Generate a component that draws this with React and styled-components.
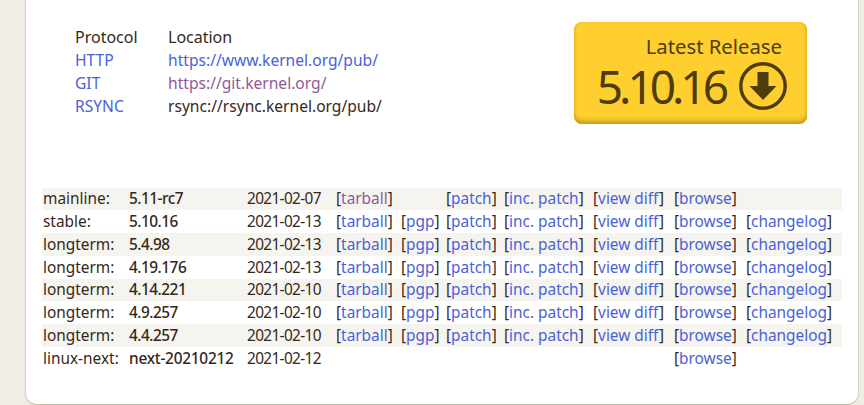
import styled, { createGlobalStyle } from "styled-components";

const GlobalStyle = createGlobalStyle`
  html, body {
    margin: 0;
    height: 405px;
    overflow: hidden;
    background: #f0eee4;
  }
  body {
    font-family: "Noto Sans", "Open Sans", sans-serif;
    font-size: 15.6px;
    color: #35281a;
  }
`;

const Page = styled.div`
  width: 864px;
  height: 405px;
  padding: 0 6px 1px 26px;
  box-sizing: border-box;
`;
const Card = styled.main`
  height: 404px;
  box-sizing: border-box;
  background: #fff;
  border-radius: 0 0 10px 10px;
  box-shadow: 0 1px 1px #bdb8a0, -1px 0 1px #d3d0bf, 1px 0 1px #d8d5c5;
  padding: 26px 16px 0;
`;
const Top = styled.div`
  display: flex;
  justify-content: space-between;
  align-items: flex-start;
  height: 162px;
`;
const MirrorTable = styled.table`
  border-collapse: collapse;
  margin-left: 33px;
  line-height: 23px;
  th, td {
    padding: 0;
    font-weight: 400;
    text-align: left;
  }
  th {
    font-size: 16px;
  }
  th:first-child, td:first-child {
    width: 93px;
  }
`;
const Link = styled.a`
  color: ${(p) => (p.$visited ? "#8f5a96" : "#4a61d8")};
  text-decoration: none;
`;
const Latest = styled.a`
  display: block;
  width: 233px;
  height: 102px;
  margin: -4px 35px 0 0;
  box-sizing: border-box;
  padding: 10px 20px 0;
  border-radius: 8px;
  background: #ffcf2f;
  box-shadow: inset 0 -5px 5px -2px #c39a1a, inset -2px 0 3px -1px #e0b325, inset 2px 0 3px -1px #e6ba28;
  color: #4e3d0c;
  text-align: right;
`;
const LatestLabel = styled.div`
  font-size: 20.3px;
  line-height: 28px;
  padding-right: 5px;
`;
const LatestRow = styled.div`
  display: flex;
  justify-content: flex-end;
  align-items: center;
  gap: 14px;
  margin-top: 2px;
`;
const LatestVersion = styled.span`
  font-size: 46px;
  line-height: 48px;
  letter-spacing: -4px;
`;
const DownloadSvg = styled.svg`
  flex-shrink: 0;
  display: block;
`;
const Releases = styled.table`
  border-collapse: collapse;
  table-layout: fixed;
  width: 800px;
  font-size: 15.4px;
  line-height: 23px;
  tr:nth-child(odd) {
    background: #f5f4ef;
  }
  tr:last-child {
    background: none;
  }
  tr:nth-child(4n + 1) td {
    line-height: 22px;
  }
  td {
    padding: 0 0 0 1px;
    white-space: nowrap;
    overflow: visible;
  }
`;
const Version = styled.td`
  font-weight: 500;
  letter-spacing: ${(p) => (p.$tight ? "-0.5px" : "-0.25px")};
`;
const DateCell = styled.td`
  letter-spacing: -0.65px;
`;

const columns = [86, 118, 89, 65, 45, 58, 89, 81, 72, 97];

const releases = [
  { kind: "mainline:", version: "5.11-rc7", date: "2021-02-07", pgp: false, log: false, visited: true },
  { kind: "stable:", version: "5.10.16", date: "2021-02-13", pgp: true, log: true },
  { kind: "longterm:", version: "5.4.98", date: "2021-02-13", pgp: true, log: true },
  { kind: "longterm:", version: "4.19.176", date: "2021-02-13", pgp: true, log: true },
  { kind: "longterm:", version: "4.14.221", date: "2021-02-10", pgp: true, log: true },
  { kind: "longterm:", version: "4.9.257", date: "2021-02-10", pgp: true, log: true },
  { kind: "longterm:", version: "4.4.257", date: "2021-02-10", pgp: true, log: true },
];

const Bracket = ({ children, visited }) => (
  <td>
    [<Link href="#" $visited={visited}>{children}</Link>]
  </td>
);

const DownloadIcon = () => (
  <DownloadSvg width="48" height="48" viewBox="0 0 48 48" aria-hidden="true">
    <circle cx="24" cy="24" r="22.2" fill="none" stroke="#4e3d0c" strokeWidth="3.4" />
    <path d="M18.500 10h11v14h8L24 38 10.500 24h8z" fill="#4e3d0c" />
  </DownloadSvg>
);

export default function App() {
  return (
    <Page>
      <GlobalStyle />
      <Card>
        <Top>
          <MirrorTable>
            <thead>
              <tr>
                <th>Protocol</th>
                <th>Location</th>
              </tr>
            </thead>
            <tbody>
              <tr>
                <td><Link href="#">HTTP</Link></td>
                <td><Link href="#">https://www.kernel.org/pub/</Link></td>
              </tr>
              <tr>
                <td><Link href="#">GIT</Link></td>
                <td><Link href="#" $visited>https://git.kernel.org/</Link></td>
              </tr>
              <tr>
                <td><Link href="#">RSYNC</Link></td>
                <td>rsync://rsync.kernel.org/pub/</td>
              </tr>
            </tbody>
          </MirrorTable>
          <Latest>
            <LatestLabel>Latest Release</LatestLabel>
            <LatestRow>
              <LatestVersion>5.10.16</LatestVersion>
              <DownloadIcon />
            </LatestRow>
          </Latest>
        </Top>
        <Releases>
          <colgroup>
            {columns.map((w, i) => (
              <col key={i} style={{ width: w }} />
            ))}
          </colgroup>
          <tbody>
            {releases.map((r) => (
              <tr key={r.version}>
                <td>{r.kind}</td>
                <Version $tight>{r.version}</Version>
                <DateCell>{r.date}</DateCell>
                <Bracket visited={r.visited}>tarball</Bracket>
                {r.pgp ? <Bracket>pgp</Bracket> : <td />}
                <Bracket>patch</Bracket>
                <Bracket>inc. patch</Bracket>
                <Bracket>view diff</Bracket>
                <Bracket>browse</Bracket>
                {r.log ? <Bracket>changelog</Bracket> : <td />}
              </tr>
            ))}
            <tr>
              <td>linux-next:</td>
              <Version>next-20210212</Version>
              <DateCell>2021-02-12</DateCell>
              <td />
              <td />
              <td />
              <td />
              <td />
              <Bracket>browse</Bracket>
              <td />
            </tr>
          </tbody>
        </Releases>
      </Card>
    </Page>
  );
}
